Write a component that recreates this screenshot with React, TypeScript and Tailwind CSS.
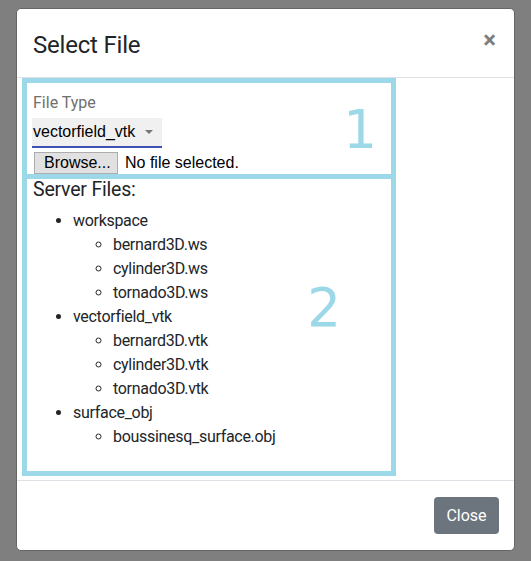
import React from "react";

const ws = ["bernard3D.ws", "cylinder3D.ws", "tornado3D.ws"];
const vtk = ["bernard3D.vtk", "cylinder3D.vtk", "tornado3D.vtk"];
const obj = ["boussinesq_surface.obj"];

function Group({ name, files }: { name: string; files: string[] }) {
  return (
    <li>
      {name}
      <ul className="list-[circle] pl-10">
        {files.map((f) => (
          <li key={f}>{f}</li>
        ))}
      </ul>
    </li>
  );
}

export default function App() {
  return (
    <div className="min-h-[561px] w-full bg-[#7f7f7f] pt-2 font-['Roboto',sans-serif] text-[#212529]">
      <div className="ml-[16px] w-[499px] rounded-[5px] border border-[#666] bg-white">
        <div className="flex items-start justify-between border-b border-[#dee2e6] px-4 pb-[14px] pt-[18px]">
          <h4 className="text-[24px] font-normal leading-[36px] tracking-[-0.2px]">Select File</h4>
          <span className="mr-[2px] mt-[-5px] text-[24px] font-bold leading-[36px] text-black opacity-50">
            ×
          </span>
        </div>
        <div className="pb-[4px] pl-[5px] pt-0">
          <div className="relative w-[374px] border-[5px] border-[#9cd8e8] px-[6px] pt-[8px]">
            <div className="text-[16px] leading-[24px] text-[#6f6f6f]">File Type</div>
            <div className="mt-[3px] ml-[-1px] flex h-[30px] w-[130px] items-center justify-between border-b-2 border-[#3f51b5] bg-[#f0f0f0] pl-[1px] pr-[9px] font-['Liberation_Sans',Arial,sans-serif] text-[16px] leading-[18px] text-black">
              <span>vectorfield_vtk</span>
              <svg width="8" height="4" viewBox="0 0 8 4">
                <polygon points="0,0 8,0 4,4" fill="#757575" />
              </svg>
            </div>
            <div className="mt-[4px] flex h-[22px] items-center font-['Liberation_Sans',Arial,sans-serif] text-[16px] leading-[20px] text-black">
              <span className="ml-[1px] flex h-[22px] w-[84px] items-center border border-[#adadad] bg-[#e1e1e1] pl-[9px]">
                Browse...
              </span>
              <span className="ml-[7px]">No file selected.</span>
            </div>
            <div className="absolute right-[14px] top-[20px] font-['DejaVu_Sans',sans-serif] text-[53px] leading-none text-[#9cd8e8]">
              1
            </div>
          </div>
          <div className="relative w-[374px] border-[5px] border-t-0 border-[#9cd8e8] pb-[22px] pl-[6px]">
            <div className="text-[19.5px] leading-[22px] tracking-[-0.2px]">Server Files:</div>
            <ul className="mt-2 list-disc pl-10 text-[16px] leading-[24px] tracking-[-0.3px]">
              <Group name="workspace" files={ws} />
              <Group name="vectorfield_vtk" files={vtk} />
              <Group name="surface_obj" files={obj} />
            </ul>
            <div className="absolute right-[50px] top-[102px] font-['DejaVu_Sans',sans-serif] text-[53px] leading-none text-[#9cd8e8]">
              2
            </div>
          </div>
        </div>
        <div className="flex justify-end border-t border-[#dee2e6] px-[15px] py-4">
          <button className="flex h-[37px] w-[65px] items-center justify-center rounded-[4px] bg-[#6c757d] text-[16px] text-white">
            Close
          </button>
        </div>
      </div>
    </div>
  );
}
